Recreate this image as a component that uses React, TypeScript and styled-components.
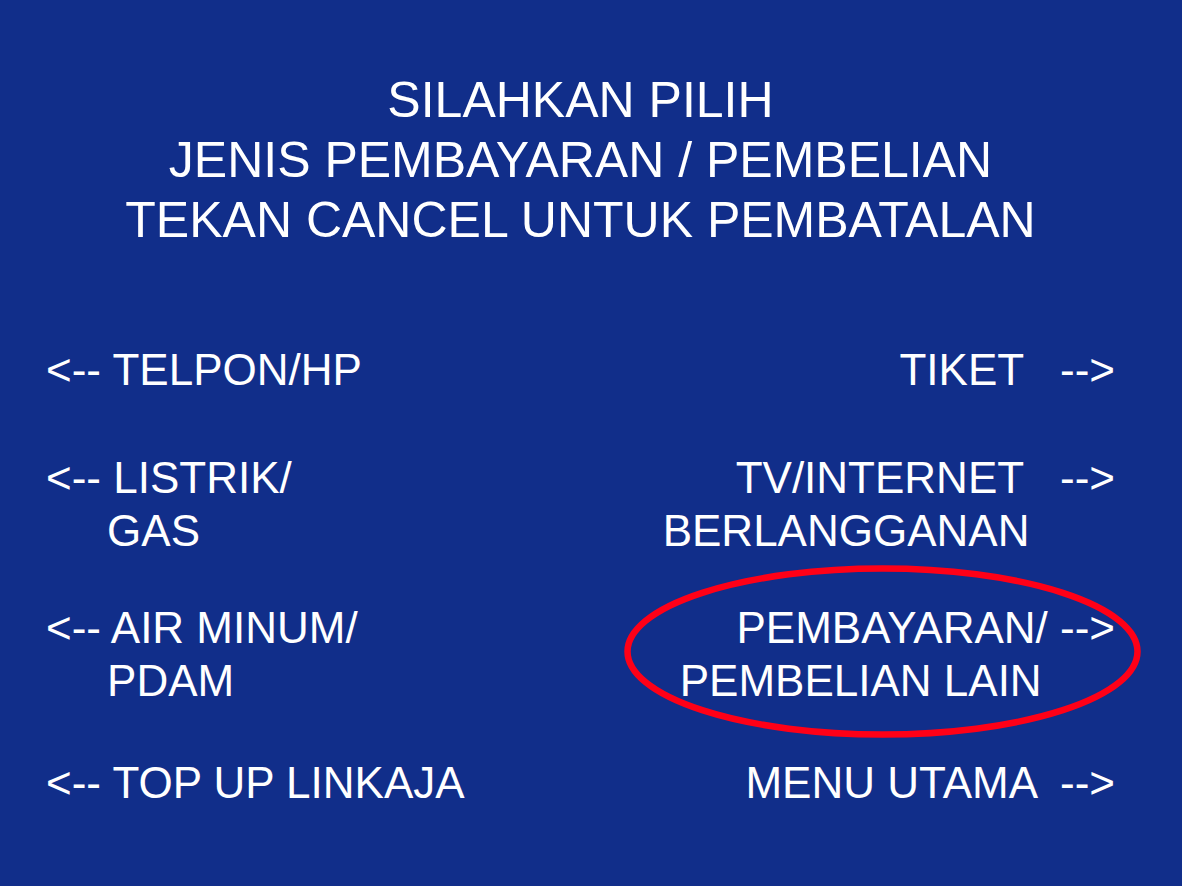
import React from "react";
import styled, { createGlobalStyle } from "styled-components";

const GlobalStyle = createGlobalStyle`
  *, *::before, *::after { box-sizing: border-box; }
  body {
    margin: 0;
    background: #112e8a;
    color: #fff;
    font-family: "Liberation Sans", Arial, sans-serif;
  }
`;

const Screen = styled.main`
  min-height: 100vh;
  padding: 70px 67px 0 46px;
`;

const Heading = styled.h1`
  margin: 0 0 93px;
  font-size: 50px;
  font-weight: 400;
  line-height: 60px;
  text-align: center;
`;

const Line = styled.span`
  display: block;
  white-space: pre;
`;

const Menu = styled.nav`
  display: flex;
  justify-content: space-between;
`;

const Column = styled.div<{ $end?: boolean }>`
  display: flex;
  flex-direction: column;
  align-items: ${(p) => (p.$end ? "flex-end" : "flex-start")};
`;

const Option = styled.button<{ $gap?: number; $end?: boolean }>`
  position: relative;
  display: flex;
  flex-direction: column;
  align-items: ${(p) => (p.$end ? "flex-end" : "flex-start")};
  margin: 0 0 ${(p) => p.$gap ?? 0}px;
  padding: 0;
  border: 0;
  background: none;
  color: inherit;
  font: inherit;
  font-size: 44px;
  line-height: 53px;
  cursor: pointer;
`;

const Ring = styled.svg`
  position: absolute;
  top: -36px;
  right: -26px;
  width: 517px;
  height: 173px;
  pointer-events: none;
`;

export default function App() {
  return (
    <>
      <GlobalStyle />
      <Screen>
        <Heading>
          <Line>SILAHKAN PILIH</Line>
          <Line>JENIS PEMBAYARAN / PEMBELIAN</Line>
          <Line>TEKAN CANCEL UNTUK PEMBATALAN</Line>
        </Heading>
        <Menu>
          <Column>
            <Option type="button" $gap={55}>
              <Line>{"<-- TELPON/HP"}</Line>
            </Option>
            <Option type="button" $gap={44}>
              <Line>{"<-- LISTRIK/"}</Line>
              <Line>{"     GAS"}</Line>
            </Option>
            <Option type="button" $gap={49}>
              <Line>{"<-- AIR MINUM/"}</Line>
              <Line>{"     PDAM"}</Line>
            </Option>
            <Option type="button">
              <Line>{"<-- TOP UP LINKAJA"}</Line>
            </Option>
          </Column>
          <Column $end>
            <Option type="button" $end $gap={55}>
              <Line>{"TIKET   -->"}</Line>
            </Option>
            <Option type="button" $end $gap={44}>
              <Line>{"TV/INTERNET   -->"}</Line>
              <Line>{"BERLANGGANAN       "}</Line>
            </Option>
            <Option type="button" $end $gap={49}>
              <Line>{"PEMBAYARAN/ -->"}</Line>
              <Line>{"PEMBELIAN LAIN      "}</Line>
              <Ring viewBox="0 0 517 173" aria-hidden="true">
                <ellipse
                  cx="258.5"
                  cy="86.5"
                  rx="255"
                  ry="83"
                  fill="none"
                  stroke="#ff0017"
                  strokeWidth="6.5"
                />
              </Ring>
            </Option>
            <Option type="button" $end>
              <Line>{"MENU UTAMA  -->"}</Line>
            </Option>
          </Column>
        </Menu>
      </Screen>
    </>
  );
}
